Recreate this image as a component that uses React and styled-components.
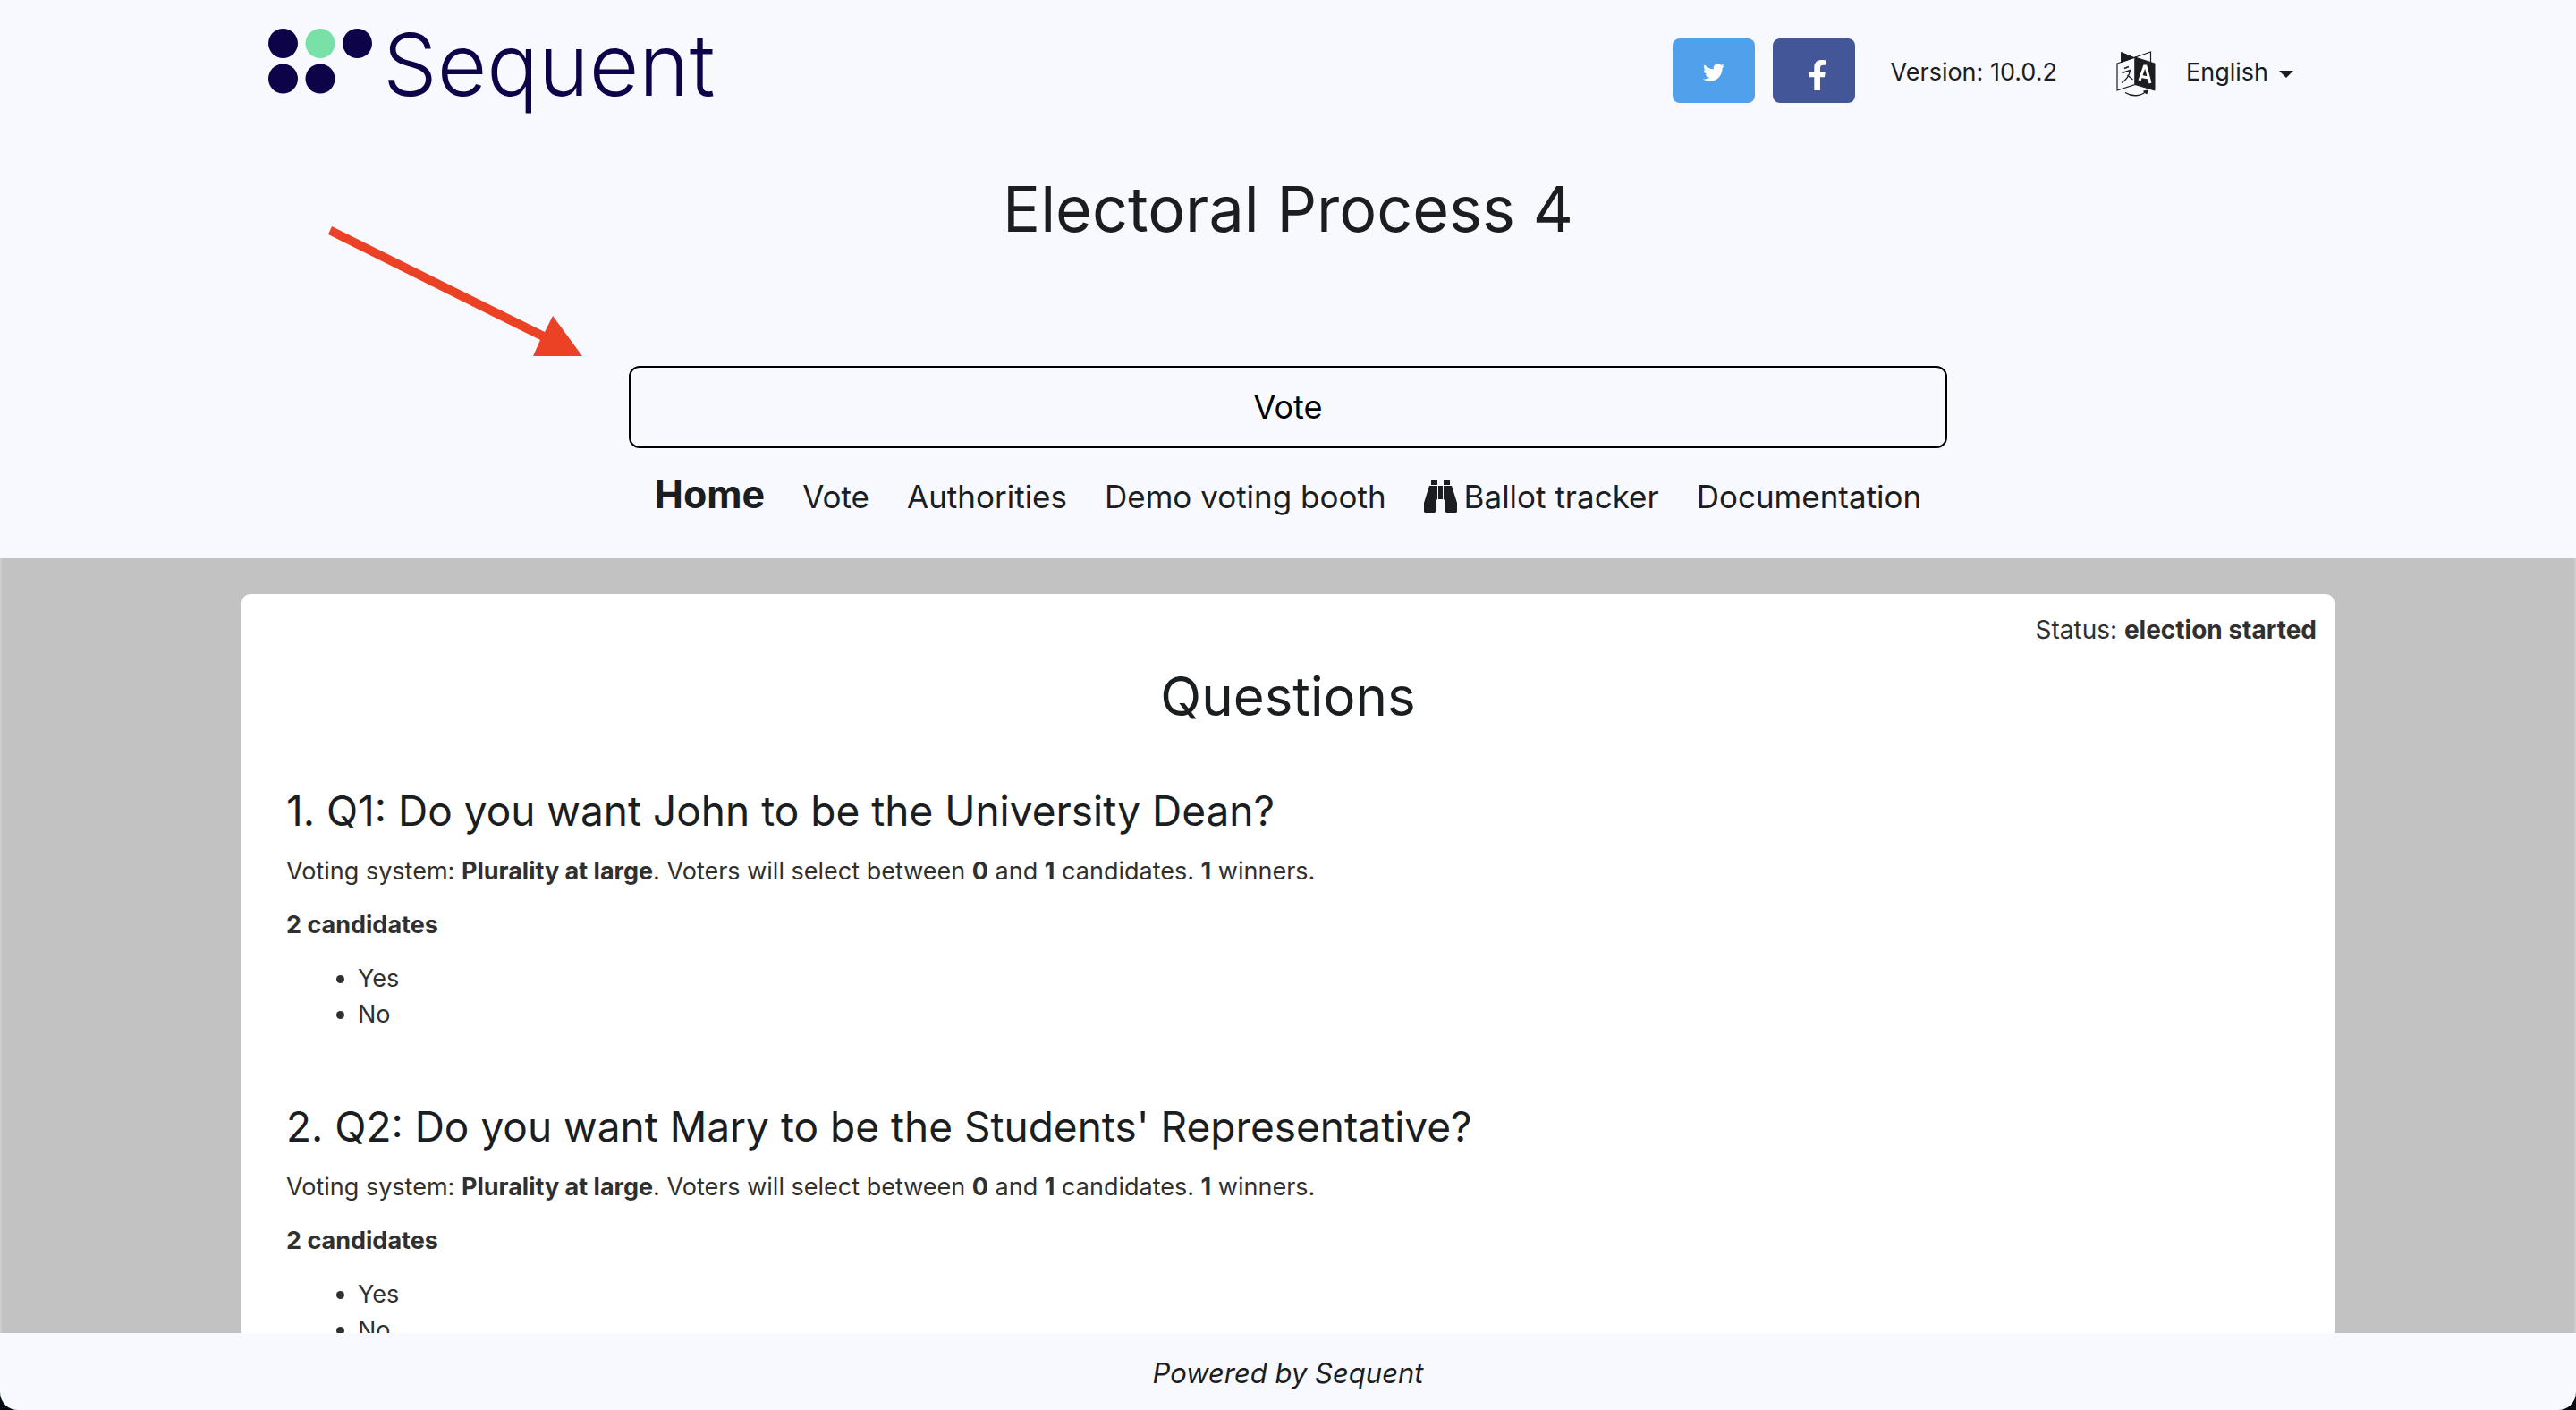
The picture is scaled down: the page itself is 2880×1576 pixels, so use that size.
import React from "react";
import styled, { createGlobalStyle } from "styled-components";
import { FaFacebookF, FaTwitter } from "react-icons/fa";

const GlobalStyle = createGlobalStyle`
  *, *::before, *::after { box-sizing: border-box; }
  html { background: #050b12; }
  body {
    margin: 0;
    font-family: Inter, "Open Sans", sans-serif;
    font-size: 27px;
    line-height: 40px;
    color: #303030;
  }
`;

const Page = styled.div`
  display: flex;
  flex-direction: column;
  height: 100vh;
  overflow: hidden;
  background: #f8f9ff;
  border-radius: 0 0 20px 20px;
`;

const Header = styled.header`
  flex: none;
  position: relative;
  color: #1b1e21;
`;

const Container = styled.div`
  width: 100%;
  max-width: 2340px;
  margin: 0 auto;
`;

const TopBar = styled(Container)`
  display: flex;
  justify-content: space-between;
  padding: 20px 46px 0 30px;
  height: 160px;
`;

const Brand = styled.a`
  display: flex;
  align-items: flex-start;
  gap: 12px;
  color: #0c0348;
  text-decoration: none;
`;

const Dots = styled.svg`
  width: 116px;
  height: 73px;
  margin-top: 12px;
`;

const Wordmark = styled.span`
  font-size: 96px;
  line-height: 104px;
  font-weight: 300;
`;

const Tools = styled.div`
  display: flex;
  align-items: center;
  height: 72px;
  margin-top: 23px;
  gap: 20px;
`;

const SocialLink = styled.a`
  display: flex;
  align-items: center;
  justify-content: center;
  width: 92px;
  height: 72px;
  padding: ${(p) => p.$inset};
  border-radius: 8px;
  color: #fff;
  background: ${(p) => p.$color};
`;

const Version = styled.span`
  margin: 0 46px 0 19px;
  padding-top: 4px;
`;

const Language = styled.label`
  display: flex;
  align-items: center;
  gap: 12px;
  padding-top: 4px;
`;

const TranslateIcon = styled.svg`
  width: 44px;
  height: 52px;
  margin: 4px 22px 0 0;
`;

const LanguageSelect = styled.select`
  appearance: none;
  field-sizing: content;
  border: 0;
  padding: 0;
  background: none;
  font: inherit;
  color: inherit;
`;

const Caret = styled.svg`
  width: 16px;
  height: 8px;
  margin-top: 4px;
`;

const Title = styled.h1`
  margin: 32px 0 0;
  font-size: 70px;
  line-height: 84px;
  font-weight: 400;
  text-align: center;
`;

const Pointer = styled.svg`
  position: absolute;
  left: 367px;
  top: 253px;
  width: 285px;
  height: 146px;
`;

const VoteButton = styled.button`
  display: block;
  width: 63%;
  height: 92px;
  margin: 133px auto 0;
  border: 2px solid #000;
  border-radius: 12px;
  background: transparent;
  color: #000;
  font: inherit;
  font-size: 36px;
`;

const Nav = styled.nav`
  display: flex;
  justify-content: center;
  align-items: baseline;
  gap: 42px;
  padding: 23px 0 41px;
  line-height: 56px;
`;

const NavLink = styled.a`
  color: inherit;
  text-decoration: none;
  font-size: ${(p) => (p.$active ? 43 : 35)}px;
  font-weight: ${(p) => (p.$active ? 700 : 400)};
`;

const BinocularsIcon = styled.svg`
  width: 37px;
  height: 36px;
  margin-right: 8px;
  vertical-align: -5px;
`;

const Main = styled.main`
  flex: 1;
  min-height: 0;
  overflow: hidden;
  padding-top: 40px;
  background: #c2c2c2;
  border: solid #cdcdcd;
  border-width: 0 2px;
`;

const Card = styled(Container)`
  min-height: 100%;
  padding: 20px 20px 60px;
  border-radius: 10px;
  background: #fff;
`;

const Status = styled.p`
  margin: 0;
  font-size: 28px;
  text-align: right;
`;

const SectionTitle = styled.h2`
  margin: 18px 0 0;
  color: #1b1e21;
  font-size: 60px;
  line-height: 72px;
  font-weight: 400;
  text-align: center;
`;

const Question = styled.section`
  padding: 62px 30px 13px;
`;

const QuestionTitle = styled.h3`
  margin: 0 0 18px;
  color: #1b1e21;
  font-size: 46px;
  line-height: 60px;
  font-weight: 400;
`;

const Text = styled.p`
  margin: 0 0 20px;
`;

const Answers = styled.ul`
  margin: 0;
  padding: 0 0 0 80px;
`;

const Footer = styled.footer`
  flex: none;
  padding: 25px 0 21px;
  color: #1b1e21;
  font-size: 31px;
  font-style: italic;
  text-align: center;
`;

const questions = [
  "1. Q1: Do you want John to be the University Dean?",
  "2. Q2: Do you want Mary to be the Students' Representative?",
];

const navItems = ["Home", "Vote", "Authorities", "Demo voting booth", "Ballot tracker", "Documentation"];

function Logo() {
  return (
    <Brand href="#">
      <Dots viewBox="0 0 116 73" fill="currentColor" aria-hidden="true">
        <circle cx="16.5" cy="16.5" r="16.5" />
        <circle cx="58" cy="16.5" r="16.5" fill="#79e1a8" />
        <circle cx="99.5" cy="16.5" r="16.5" />
        <circle cx="16.5" cy="56" r="16.5" />
        <circle cx="58" cy="56" r="16.5" />
      </Dots>
      <Wordmark>Sequent</Wordmark>
    </Brand>
  );
}

function Translate() {
  return (
    <TranslateIcon viewBox="0 0 44 52" fill="none" stroke="currentColor" aria-hidden="true">
      <path d="M5.500 1.500v11L20 7.500z" fill="currentColor" strokeWidth="1" />
      <path d="M21 7L38.500 1v11.500" strokeWidth="1.200" />
      <path d="M1 14l20-7v30.500L1 44z" strokeWidth="1.200" />
      <path d="M21 7l22 7v30l-22-6.500z" fill="currentColor" strokeWidth="1" />
      <path d="M26 33l5.500-16h1.500l5 19M28 28.500l8 1.500" stroke="#fff" strokeWidth="3" />
      <path d="M9 19.500l5-2M6.500 24.500l9-3c-1 6-4.500 11-9.500 14M12.500 27l6 5" strokeWidth="1.400" />
      <path d="M10 46.500c8 5 17 4 23-1" strokeWidth="1.400" />
      <path d="M30.500 45l4.500-1-1 4z" fill="currentColor" strokeWidth="1" />
    </TranslateIcon>
  );
}

function Binoculars() {
  return (
    <BinocularsIcon viewBox="0 0 37 36" fill="currentColor" aria-hidden="true">
      <path d="M8 0h7v5H8zM22 0h7v5h-7zM16 6h5v15h-5z" />
      <path d="M6 6h9v15l-2 2v12l-1 1H1l-1-1V25z" />
      <path d="M31 6h-9v15l2 2v12l1 1h11l1-1V25z" />
    </BinocularsIcon>
  );
}

export default function App() {
  return (
    <>
      <GlobalStyle />
      <Page>
        <Header>
          <TopBar>
            <Logo />
            <Tools>
              <SocialLink href="#" $color="#50a0ec" $inset="4px 0 0" aria-label="Twitter">
                <FaTwitter size={24} />
              </SocialLink>
              <SocialLink href="#" $color="#435698" $inset="10px 0 0 8px" aria-label="Facebook">
                <FaFacebookF size={34} />
              </SocialLink>
              <Version>Version: 10.0.2</Version>
              <Language>
                <Translate />
                <LanguageSelect defaultValue="English" aria-label="Language">
                  <option>English</option>
                </LanguageSelect>
                <Caret viewBox="0 0 16 8" aria-hidden="true">
                  <path d="M0 0h16l-8 8z" fill="currentColor" />
                </Caret>
              </Language>
            </Tools>
          </TopBar>
          <Title>Electoral Process 4</Title>
          <Container>
            <VoteButton type="button">Vote</VoteButton>
            <Nav>
              {navItems.map((item) => (
                <NavLink key={item} href="#" $active={item === "Home"}>
                  {item === "Ballot tracker" && <Binoculars />}
                  {item}
                </NavLink>
              ))}
            </Nav>
          </Container>
          <Pointer viewBox="0 0 285 146" fill="#eb4226" aria-hidden="true">
            <path d="M4 0L242 118L251 100L284 145H229L237 127L0 9z" />
          </Pointer>
        </Header>
        <Main>
          <Card>
            <Status>
              Status: <strong>election started</strong>
            </Status>
            <SectionTitle>Questions</SectionTitle>
            {questions.map((title) => (
              <Question key={title}>
                <QuestionTitle>{title}</QuestionTitle>
                <Text>
                  Voting system: <strong>Plurality at large</strong>. Voters will select between{" "}
                  <strong>0</strong> and <strong>1</strong> candidates. <strong>1</strong> winners.
                </Text>
                <Text>
                  <strong>2 candidates</strong>
                </Text>
                <Answers>
                  <li>Yes</li>
                  <li>No</li>
                </Answers>
              </Question>
            ))}
          </Card>
        </Main>
        <Footer>Powered by Sequent</Footer>
      </Page>
    </>
  );
}
